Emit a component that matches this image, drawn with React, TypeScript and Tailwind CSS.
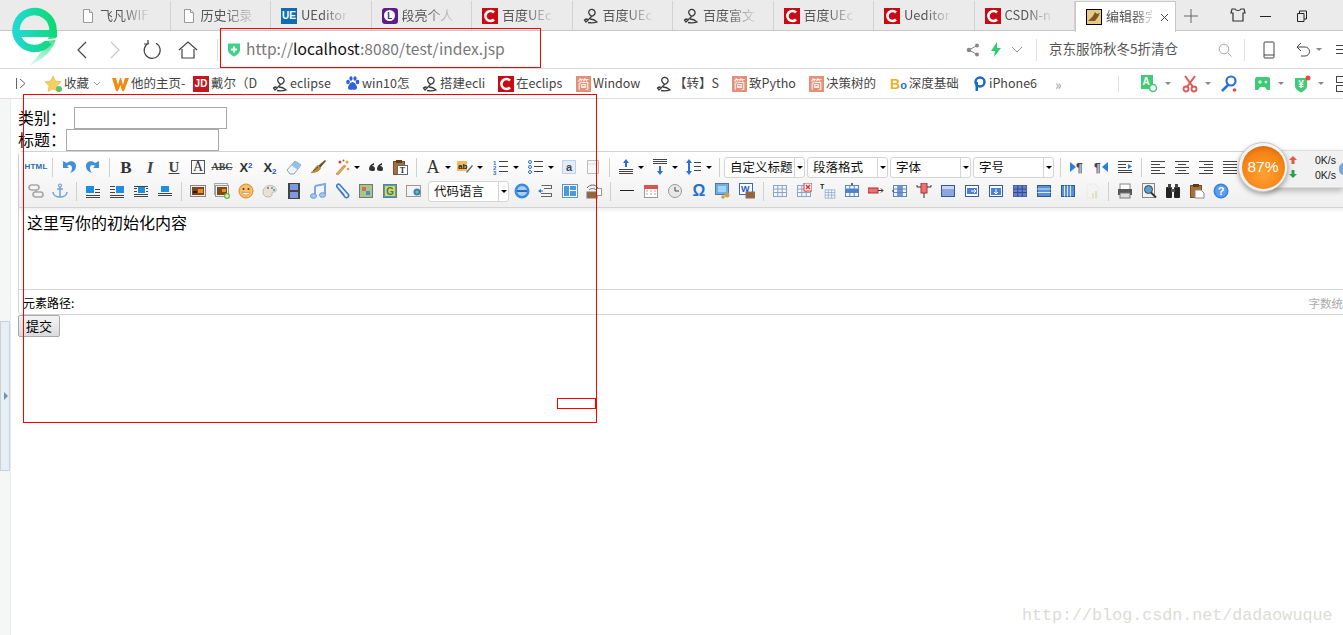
import React from 'react';

const Svg: React.FC<{ s?: number; className?: string; children: React.ReactNode }> = ({ s = 16, className, children }) => (
  <svg width={s} height={s} viewBox="0 0 16 16" className={className}>
    {children}
  </svg>
);

const Lines: React.FC<{ x?: number; y?: number; w?: number; n?: number; gap?: number; c?: string }> = ({ x = 1, y = 2, w = 14, n = 4, gap = 3, c = '#444' }) => (
  <>
    {Array.from({ length: n }).map((_, i) => (
      <rect key={i} x={x} y={y + i * gap} width={w} height={1} fill={c} />
    ))}
  </>
);

const Grid: React.FC<{ hi?: React.ReactNode; c?: string; bg?: string }> = ({ hi, c = '#5c84b8', bg = '#e4eefa' }) => (
  <>
    <rect x="1.5" y="2.5" width="13" height="11" fill={bg} stroke={c} />
    {hi}
    <path d="M1.5 6h13M1.5 9.500h13M5.800 2.500v11M10.200 2.500v11" stroke={c} strokeWidth="1" fill="none" />
  </>
);

const Picture: React.FC = () => (
  <>
    <rect x="0.500" y="2.500" width="15" height="11" fill="#eee" stroke="#888" />
    <rect x="2" y="4" width="12" height="8" fill="#7a4a1c" />
    <rect x="8" y="6" width="5" height="4" fill="#f08a1e" />
    <rect x="3" y="8" width="4" height="2" fill="#2a1a08" />
  </>
);

const Wrap: React.FC<{ type: 'left' | 'right' | 'block' | 'center' }> = ({ type }) => (
  <Svg>
    {type === 'left' && <><rect x="1" y="3" width="8" height="7" fill="#1b8fe0" /><Lines x={10} y={6} w={5} n={2} /><Lines x={1} y={12} n={2} gap={2} /></>}
    {type === 'right' && <><rect x="7" y="3" width="8" height="7" fill="#1b8fe0" /><Lines x={1} y={3} w={5} n={3} /><Lines x={1} y={12} n={2} gap={2} /></>}
    {type === 'block' && <><Lines x={1} y={3} w={14} n={1} /><rect x="5" y="4" width="7" height="6" fill="#1b8fe0" /><Lines x={1} y={5} w={3} n={2} /><Lines x={13} y={5} w={2} n={2} /><Lines x={1} y={11} n={2} gap={2} /></>}
    {type === 'center' && <><rect x="4" y="3" width="8" height="6" fill="#1b8fe0" /><Lines x={1} y={10} n={2} gap={2} /></>}
  </Svg>
);

const icons: Record<string, React.ReactNode> = {
  html: <span className="text-[8px] font-bold text-[#2a6aa8] tracking-[0.2px] font-['Liberation_Sans',sans-serif]">HTML</span>,
  undo: <Svg><path d="M2 2v7h6L6 7c2-2 5-1 5 2 0 2-1 4-2 5 3-1 6-3 6-7 0-5-6-6-9-3z" fill="#3f8fdc" /></Svg>,
  redo: <Svg><path d="M14 2v7H8l2-2C8 5 5 6 5 9c0 2 1 4 2 5-3-1-6-3-6-7 0-5 6-6 9-3z" fill="#3f8fdc" /></Svg>,
  b: <span className="font-['Liberation_Serif',serif] font-bold text-[17px] text-[#333] leading-none">B</span>,
  i: <span className="font-['Liberation_Serif',serif] italic font-bold text-[17px] text-[#444] leading-none">I</span>,
  u: <span className="font-['Liberation_Serif',serif] underline font-bold text-[15px] text-[#444] leading-none">U</span>,
  fbox: <span className="font-['Liberation_Serif',serif] border border-[#555] w-[14px] h-[14px] flex items-center justify-center text-[14px] text-[#333] leading-none">A</span>,
  abc: <span className="font-['Liberation_Serif',serif] line-through text-[10px] font-bold text-[#444] leading-none">ABC</span>,
  sup: <span className="font-['Liberation_Sans',sans-serif] font-bold text-[13px] text-[#333] leading-none">X<sup className="text-[8px] text-[#2456c8]">2</sup></span>,
  sub: <span className="font-['Liberation_Sans',sans-serif] font-bold text-[13px] text-[#333] leading-none">X<sub className="text-[8px] text-[#2456c8]">2</sub></span>,
  eraser: <Svg><path d="M1 11 9 2l6 4-7 9H4z" fill="#eef4fb" stroke="#8aa" /><path d="M9 2l6 4-3.500 4.500-6-4z" fill="#8fc0ee" /></Svg>,
  brush: <Svg><path d="M8 7l7-6 1 1-6 7z" fill="#6b4a22" /><path d="M1 13c3-1 4-6 7-7l3 3c-1 3-5 5-10 5z" fill="#b78a3c" /><path d="M3 12l5-4" stroke="#6b4a22" /></Svg>,
  wand: <Svg><path d="M2 15 10 6l2 1-8 9z" fill="#e9a84a" stroke="#a86a1c" strokeWidth=".5" /><circle cx="6" cy="3" r="1.500" fill="#e34" /><circle cx="13" cy="3" r="1.500" fill="#e8a020" /><circle cx="14" cy="10" r="1.300" fill="#e8a020" /><circle cx="9.500" cy="1.500" r="1" fill="#3a8a3a" /></Svg>,
  quote: <Svg><path d="M1 10c0-3 2-5 5-6v2c-1 0-2 1-2 1 2 0 3 1 3 3s-1 2-3 2-3-1-3-2zM9 10c0-3 2-5 5-6v2c-1 0-2 1-2 1 2 0 3 1 3 3s-1 2-3 2-3-1-3-2z" fill="#333" /></Svg>,
  paste: <Svg><rect x="1.500" y="2.500" width="11" height="13" fill="#a9713a" stroke="#7a4d22" /><rect x="4" y="1" width="6" height="3" fill="#5d3c1a" /><rect x="5.500" y="6.500" width="10" height="9" fill="#fff" stroke="#667" /><text x="10.500" y="14" textAnchor="middle" fontSize="8" fontWeight="700" fontFamily="Liberation Serif" fill="#234">T</text></Svg>,
  fcolor: <span className="font-['Liberation_Serif',serif] text-[18px] text-[#333] leading-none">A</span>,
  bcolor: <Svg><rect x="0" y="2" width="10" height="10" fill="#f4b860" /><text x="1" y="10" fontSize="8" fontWeight="700" fontFamily="Liberation Sans" fill="#222">ab</text><path d="M9 13l6-7 1 1-6 7z" fill="#666" /></Svg>,
  ol: <Svg><text x="0" y="6" fontSize="6" fontWeight="700" fontFamily="Liberation Sans" fill="#2a6fd0">1</text><text x="0" y="11" fontSize="6" fontWeight="700" fontFamily="Liberation Sans" fill="#2a6fd0">2</text><text x="0" y="16" fontSize="6" fontWeight="700" fontFamily="Liberation Sans" fill="#2a6fd0">3</text><Lines x={6} y={2} w={9} n={3} gap={5} /></Svg>,
  ul: <Svg><circle cx="2" cy="3" r="1.500" fill="none" stroke="#2a6fd0" /><circle cx="2" cy="8" r="1.500" fill="none" stroke="#2a6fd0" /><circle cx="2" cy="13" r="1.500" fill="none" stroke="#2a6fd0" /><Lines x={6} y={2} w={9} n={3} gap={5} /></Svg>,
  selectall: <Svg><rect x="1.500" y="1.500" width="13" height="13" fill="#e2ecfa" stroke="#8ab0e6" strokeDasharray="1 1" /><text x="8" y="12" textAnchor="middle" fontSize="11" fontWeight="700" fontFamily="Liberation Sans" fill="#444">a</text></Svg>,
  page: <Svg><path d="M2.500 1.500h11v13h-11z" fill="#f8f8f8" stroke="#bbb" /><path d="M3 5h10" stroke="#ddd" /></Svg>,
  spTop: <Svg><path d="M8 0l3 4H9v4H7V4H5z" fill="#2a6fd0" /><Lines x={1} y={10} n={3} gap={2} /></Svg>,
  spBottom: <Svg><Lines x={1} y={0} n={3} gap={2} /><path d="M8 16l3-4H9V7H7v5H5z" fill="#2a6fd0" /></Svg>,
  lh: <Svg><path d="M3 0l3 4H4v8h2l-3 4-3-4h2V4H0z" fill="#2a6fd0" /><Lines x={8} y={3} w={7} n={3} gap={4} /></Svg>,
  ltr: <Svg><path d="M1 3l6 5-6 5z" fill="#2a7fdc" /><text x="7" y="13" fontSize="12" fontFamily="Liberation Sans" fontWeight="700" fill="#445">¶</text></Svg>,
  rtl: <Svg><path d="M15 3 9 8l6 5z" fill="#2a7fdc" /><text x="1" y="13" fontSize="12" fontFamily="Liberation Sans" fontWeight="700" fill="#445">¶</text></Svg>,
  indent: <Svg><Lines x={1} y={2} w={14} n={1} /><Lines x={1} y={5} w={8} n={2} /><path d="M11 5l4 2.500-4 2.500z" fill="#2a7fdc" /><Lines x={1} y={11} w={14} n={2} gap={2} /></Svg>,
  aleft: <Svg><Lines x={1} y={2} w={14} n={1} /><Lines x={1} y={5} w={9} n={1} /><Lines x={1} y={8} w={14} n={1} /><Lines x={1} y={11} w={9} n={1} /><Lines x={1} y={14} w={14} n={1} /></Svg>,
  acenter: <Svg><Lines x={1} y={2} w={14} n={1} /><Lines x={4} y={5} w={8} n={1} /><Lines x={1} y={8} w={14} n={1} /><Lines x={4} y={11} w={8} n={1} /><Lines x={1} y={14} w={14} n={1} /></Svg>,
  aright: <Svg><Lines x={1} y={2} w={14} n={1} /><Lines x={6} y={5} w={9} n={1} /><Lines x={1} y={8} w={14} n={1} /><Lines x={6} y={11} w={9} n={1} /><Lines x={1} y={14} w={14} n={1} /></Svg>,
  ajust: <Svg><Lines x={1} y={2} w={14} n={5} /></Svg>,
  link: <Svg><rect x="1" y="2" width="10" height="5" rx="2.500" fill="none" stroke="#a8a8a8" strokeWidth="1.700" /><rect x="5" y="9" width="10" height="5" rx="2.500" fill="none" stroke="#a8a8a8" strokeWidth="1.700" /><path d="M8 7v2" stroke="#a8a8a8" strokeWidth="1.700" /></Svg>,
  anchor: <Svg><circle cx="8" cy="2.500" r="1.500" fill="none" stroke="#6fa3d8" strokeWidth="1.200" /><path d="M8 4v10M5 6h6M1 9c0 3 3 5 7 5s7-2 7-5" fill="none" stroke="#6fa3d8" strokeWidth="1.500" /></Svg>,
  wleft: <Wrap type="left" />,
  wright: <Wrap type="right" />,
  wblock: <Wrap type="block" />,
  wcenter: <Wrap type="center" />,
  image: <Svg><Picture /></Svg>,
  multi: <Svg><rect x="0.500" y="0.500" width="13" height="11" fill="#eee" stroke="#aaa" /><rect x="1.500" y="2.500" width="13" height="11" fill="#eee" stroke="#999" /><rect x="3" y="4" width="10" height="8" fill="#7a4a1c" /><rect x="8" y="6" width="4" height="3" fill="#f08a1e" /><circle cx="13" cy="13" r="3" fill="#6cb33f" /><path d="M11 13h4M13 11v4" stroke="#fff" /></Svg>,
  emoji: <Svg><circle cx="8" cy="8" r="7" fill="#f4c069" stroke="#d98a2a" /><circle cx="5.500" cy="6" r="1" fill="#5a3a10" /><circle cx="10.500" cy="6" r="1" fill="#5a3a10" /><path d="M4 9c2 1 6 1 8 0-1 4-7 4-8 0z" fill="#fff" stroke="#a86a1c" strokeWidth=".5" /></Svg>,
  scrawl: <Svg><path d="M1 9c0-5 6-8 10-6 4 2 4 5 2 6-2 0-3 0-3 2s-1 3-4 3-5-2-5-5z" fill="#e6e2d4" stroke="#bbb" /><circle cx="6" cy="5" r="1" fill="#c55" /><circle cx="10" cy="5" r="1" fill="#5a5" /><circle cx="12" cy="7" r="1" fill="#58c" /></Svg>,
  video: <Svg><rect x="2" y="0" width="12" height="16" fill="#444" /><rect x="4" y="1" width="8" height="6" fill="#7d9ade" /><rect x="4" y="9" width="8" height="6" fill="#7d9ade" /></Svg>,
  music: <Svg><path d="M5 3l10-2v10" fill="none" stroke="#7aa8e0" strokeWidth="2" /><path d="M5 3v10" stroke="#7aa8e0" strokeWidth="2" /><ellipse cx="3.500" cy="13" rx="3" ry="2.300" fill="#a8c8f0" stroke="#6a98d8" /><ellipse cx="12.500" cy="12" rx="3" ry="2.300" fill="#a8c8f0" stroke="#6a98d8" /></Svg>,
  attach: <Svg><path d="M3 4l8 10c2 2 5-1 3-3L6 2C4 0 2 2 3 4l7 8" fill="none" stroke="#3a78d0" strokeWidth="1.600" /></Svg>,
  gmap: <Svg><rect x="1.500" y="1.500" width="13" height="13" fill="#a6c78a" stroke="#777" /><rect x="4" y="4" width="4" height="4" fill="#d65" /><rect x="8" y="8" width="4" height="4" fill="#58c" /></Svg>,
  gmap2: <Svg><rect x="1.500" y="1.500" width="13" height="13" fill="#2aa8e0" stroke="#777" /><rect x="3" y="3" width="10" height="10" fill="#f4d030" /><text x="8" y="12" textAnchor="middle" fontSize="10" fontWeight="700" fontFamily="Liberation Sans" fill="#18a">G</text></Svg>,
  bmap: <Svg><rect x="0.500" y="2.500" width="14" height="11" fill="#f4f4f4" stroke="#999" /><circle cx="11" cy="9" r="3.500" fill="#3a80c8" /><circle cx="11" cy="9" r="1.500" fill="#7c5" /></Svg>,
  iframe: <Svg><circle cx="8" cy="8" r="7.500" fill="#3a8ae0" /><circle cx="8" cy="8" r="5" fill="#a6d0f6" /><rect x="3" y="7" width="10" height="2" fill="#2a6ac0" /></Svg>,
  pagebreak: <Svg><path d="M3 2h11v4H6V5h7V3H4zM3 10h11v4H3v-1h10v-2H3z" fill="#666" /><path d="M0 8l3-2v4z" fill="#2a6fd0" /><rect x="3" y="7.500" width="2" height="1" fill="#2a6fd0" /></Svg>,
  template: <Svg><rect x="0.500" y="1.500" width="15" height="13" fill="#fff" stroke="#5e92c8" /><rect x="2" y="3" width="5" height="10" fill="#4a9ae0" /><rect x="8" y="3" width="6" height="4" fill="#4a9ae0" /><rect x="8" y="8" width="6" height="5" fill="#4a9ae0" /></Svg>,
  bgimg: <Svg><path d="M1 5c3-4 8-4 11 0" fill="none" stroke="#666" /><path d="M3 7c2-2 5-2 7 0" fill="none" stroke="#666" /><rect x="1" y="9" width="10" height="6" fill="#a0622a" stroke="#777" /><rect x="10.500" y="5.500" width="5" height="7" fill="#fff" stroke="#999" /></Svg>,
  hr: <Svg><rect x="1" y="7" width="14" height="1" fill="#222" /></Svg>,
  date: <Svg><rect x="1.500" y="2.500" width="13" height="12" fill="#fff" stroke="#999" /><rect x="1" y="2" width="14" height="4" fill="#d9534f" /><path d="M3 8h2M7 8h2M11 8h2M3 11h2M7 11h2M11 11h2" stroke="#c99" /></Svg>,
  time: <Svg><circle cx="8" cy="8" r="6.500" fill="#e8e8e8" stroke="#999" /><path d="M8 4v4h4" fill="none" stroke="#444" /></Svg>,
  omega: <span className="font-['Liberation_Sans',sans-serif] font-bold text-[16px] text-[#2a6fd0] leading-none">Ω</span>,
  snap: <Svg><rect x="0.500" y="0.500" width="13" height="11" fill="#6fb0de" stroke="#4a78b0" /><rect x="3" y="3" width="8" height="6" fill="#a6d4f4" /><circle cx="12" cy="12" r="2.500" fill="#c9a050" /><circle cx="8" cy="14" r="1.800" fill="#c9a050" /></Svg>,
  word: <Svg><rect x="0.500" y="0.500" width="13" height="11" fill="#fff" stroke="#3a6ac0" /><text x="2" y="9" fontSize="9" fontWeight="700" fontFamily="Liberation Sans" fill="#2456c8">W</text><rect x="7" y="9" width="9" height="6" fill="#a0622a" stroke="#777" /></Svg>,
  table: <Svg><Grid c="#8ba6c8" bg="#f2f6fb" /></Svg>,
  tdel: <Svg><Grid c="#8ba6c8" bg="#f2f6fb" /><rect x="8" y="0" width="8" height="8" fill="#fff" stroke="#d33" /><path d="M10 2l4 4M14 2l-4 4" stroke="#d33" strokeWidth="1.500" /></Svg>,
  ttitle: <Svg><text x="0" y="6" fontSize="7" fontWeight="700" fontFamily="Liberation Sans" fill="#222">T</text><g transform="translate(4 5) scale(.75)"><Grid c="#8ba6c8" bg="#f2f6fb" /></g></Svg>,
  trow: <Svg><Grid hi={<rect x="1.500" y="6" width="13" height="3.500" fill="#4a80d8" />} bg="#f2f6fb" /><path d="M8 0v2M7 1h2" stroke="#333" /></Svg>,
  trowdel: <Svg><rect x="0" y="5" width="10" height="5" fill="#ee7070" stroke="#a33" /><path d="M10 7.500h5M13 5.500l2 2-2 2" fill="none" stroke="#333" /></Svg>,
  tcol: <Svg><Grid hi={<rect x="5.800" y="2.500" width="4.400" height="11" fill="#6a98e0" />} bg="#f2f6fb" /><path d="M0 8h2" stroke="#333" /></Svg>,
  tcoldel: <Svg><rect x="5" y="0" width="6" height="10" fill="#ee7070" stroke="#a33" /><path d="M8 10v5M1 2v2h4M15 2v2h-4" fill="none" stroke="#333" /></Svg>,
  tmerge: <Svg><rect x="1.500" y="2.500" width="13" height="11" fill="#8ba6e0" stroke="#345a9c" /><rect x="2" y="3" width="12" height="3" fill="#c6d6f4" /></Svg>,
  tright: <Svg><rect x="1.500" y="2.500" width="13" height="11" fill="#fff" stroke="#345a9c" /><rect x="3" y="5" width="10" height="6" fill="#4a80d8" /><path d="M7 8h5M10 6l2 2-2 2" fill="none" stroke="#fff" /></Svg>,
  tdown: <Svg><rect x="1.500" y="2.500" width="13" height="11" fill="#fff" stroke="#345a9c" /><rect x="3" y="5" width="10" height="7" fill="#4a80d8" /><path d="M8 6v5M6 9l2 2 2-2" fill="none" stroke="#fff" /></Svg>,
  tcell: <Svg><Grid hi={<rect x="1.500" y="2.500" width="13" height="11" fill="#6a80c8" />} c="#2a4a90" /></Svg>,
  trows: <Svg><rect x="1.500" y="2.500" width="13" height="11" fill="#5a90d8" stroke="#2a5a9c" /><path d="M1.500 6h13M1.500 9.500h13" stroke="#dce8f8" /></Svg>,
  tcols: <Svg><rect x="1.500" y="2.500" width="13" height="11" fill="#5a90d8" stroke="#2a5a9c" /><path d="M4.500 2.500v11M7.500 2.500v11M10.500 2.500v11" stroke="#dce8f8" /></Svg>,
  draft: <Svg className="opacity-40"><path d="M3 1h8l3 3v11H3z" fill="#f4f4f4" stroke="#ddd" /><rect x="8" y="10" width="2" height="5" fill="#e8c870" /><rect x="11" y="8" width="2" height="7" fill="#a8d090" /></Svg>,
  print: <Svg><rect x="3" y="1" width="10" height="6" fill="#fff" stroke="#888" /><rect x="1" y="6" width="14" height="6" fill="#555" /><rect x="3" y="10" width="10" height="5" fill="#ddd" stroke="#777" /></Svg>,
  preview: <Svg><rect x="1.500" y="0.500" width="12" height="14" fill="#f2f2f2" stroke="#888" /><circle cx="7.500" cy="6.500" r="4" fill="#5aa0d8" stroke="#444" /><path d="M10 9.500l5 5" stroke="#333" strokeWidth="2" /></Svg>,
  search: <Svg><rect x="1" y="4" width="6" height="11" rx="1" fill="#222" /><rect x="9" y="4" width="6" height="11" rx="1" fill="#222" /><rect x="3" y="1" width="3" height="4" fill="#444" /><rect x="10" y="1" width="3" height="4" fill="#444" /><rect x="6" y="6" width="4" height="3" fill="#555" /></Svg>,
  clip: <Svg><rect x="1.500" y="2.500" width="11" height="12" fill="#a9713a" stroke="#7a4d22" /><rect x="4" y="1" width="6" height="3" fill="#5d3c1a" /><path d="M6 7h6l3 3v5H6z" fill="#fff" stroke="#888" /></Svg>,
  help: <Svg><circle cx="8" cy="8" r="7.500" fill="#3a80e0" /><circle cx="8" cy="8" r="6" fill="#5b9ef0" /><text x="8" y="12" textAnchor="middle" fontSize="11" fontWeight="700" fontFamily="Liberation Sans" fill="#fff">?</text></Svg>,
};

const Btn: React.FC<{ n: string }> = ({ n }) => (
  <div className="w-6 h-6 shrink-0 flex items-center justify-center">{icons[n]}</div>
);

const Caret: React.FC = () => (
  <span className="w-0 h-0 border-x-[3px] border-x-transparent border-t-[3px] border-t-black" />
);

const Split: React.FC<{ n: string; w: string }> = ({ n, w }) => (
  <div className={`${w} h-6 shrink-0 flex items-center`}>
    <Btn n={n} />
    <Caret />
  </div>
);

const Sep: React.FC = () => (
  <div className="w-[9px] h-6 shrink-0 flex items-center justify-center">
    <span className="w-px h-[19px] bg-[#d0d0d0]" />
  </div>
);

const Combo: React.FC<{ label: string; w?: string }> = ({ label, w = 'w-[81px]' }) => (
  <div className={`${w} h-[21px] shrink-0 flex border border-[#d4d4d4] rounded-[3px] bg-white text-[12.500px] text-[#111] leading-[17px]`}>
    <span className="flex-1 pl-[5px] whitespace-nowrap">{label}</span>
    <span className="w-[10px] border-l border-[#d4d4d4] flex items-center justify-center"><Caret /></span>
  </div>
);

const Page: React.FC = () => (
  <Svg>
    <path d="M3.500 1.500h6l3 3v10h-9z" fill="#fff" stroke="#999" />
    <path d="M9.500 1.500v3h3" fill="#eee" stroke="#999" />
  </Svg>
);

const CIcon: React.FC = () => (
  <span className="w-4 h-4 bg-[#c90a14] flex items-center justify-center shrink-0">
    <svg width="14" height="14" viewBox="0 0 14 14"><path d="M11 3.500A5 5 0 1 0 11 10.500" fill="none" stroke="#fff" strokeWidth="2.600" /></svg>
  </span>
);

const Swirl: React.FC = () => (
  <Svg>
    <path d="M6 5.500C5 3 7 1 9.500 1.500S13 5 11 7 7 8 6 5.500zM9 8 3 14l-1.500-2c1-1 2-1 3-1M7 11c2 0 5 1 7 3-3 1-6 1-9 .500" fill="none" stroke="#3a3a3a" strokeWidth="1.300" />
  </Svg>
);

const Simple: React.FC = () => (
  <span className="w-[15px] h-[16px] bg-[#e58f78] text-white text-[12px] leading-[15px] text-center shrink-0">简</span>
);

const Tab: React.FC<{ icon: React.ReactNode; label: string }> = ({ icon, label }) => (
  <div className="relative w-[100.500px] h-full shrink-0 flex items-center pl-[10px] border-r border-[#d2d2d2]">
    <span className="shrink-0 w-4 h-4 flex items-center justify-center">{icon}</span>
    <span className="ml-[4px] pb-[2px] text-[13px] text-[#555] whitespace-nowrap [mask-image:linear-gradient(to_right,black_45%,rgba(0,0,0,0.1)_100%)]">{label}</span>
  </div>
);

const Mark: React.FC<{ icon: React.ReactNode; label: string; w: string }> = ({ icon, label, w }) => (
  <div className={`${w} shrink-0 flex items-center gap-[2px] whitespace-nowrap`}>
    <span className="shrink-0 flex items-center">{icon}</span>
    <span className="pb-[1px]">{label}</span>
  </div>
);

const SmallCaret: React.FC = () => (
  <span className="w-0 h-0 border-x-[3px] border-x-transparent border-t-[3px] border-t-[#888] ml-[7px]" />
);

const Logo: React.FC = () => (
  <svg width="48" height="60" viewBox="0 0 48 60" className="absolute left-[11px] top-[7px]">
    <defs>
      <linearGradient id="lg1" x1="0" x2="1" y1="0" y2="0">
        <stop offset="0" stopColor="#21d9d0" />
        <stop offset="1" stopColor="#0fd977" />
      </linearGradient>
      <linearGradient id="lg2" x1="0" x2="0" y1="0" y2="1">
        <stop offset="0" stopColor="#0fd977" />
        <stop offset="1" stopColor="#0fd977" stopOpacity="0.100" />
      </linearGradient>
    </defs>
    <path d="M46 24C46 40 34 52 18 59C24 52 33 44 37 31Z" fill="url(#lg2)" />
    <path d="M37.700 34.900A18.500 18.500 0 1 1 42 23" fill="none" stroke="url(#lg1)" strokeWidth="7.500" />
    <rect x="8" y="23" width="38" height="7" fill="url(#lg1)" />
    <path d="M32 33.500 46 32" stroke="#fff" strokeWidth="1.500" />
  </svg>
);

const App: React.FC = () => {
  const row1: React.ReactNode = (
    <div className="flex items-center h-6 pl-[5px]">
      <Btn n="html" /><Sep /><Btn n="undo" /><Btn n="redo" /><Sep />
      <Btn n="b" /><Btn n="i" /><Btn n="u" /><Btn n="fbox" /><Btn n="abc" /><Btn n="sup" /><Btn n="sub" /><Btn n="eraser" /><Btn n="brush" />
      <Split n="wand" w="w-[34px]" /><Btn n="quote" /><Btn n="paste" /><Sep />
      <Split n="fcolor" w="w-[32px]" /><Split n="bcolor" w="w-[36px]" /><Split n="ol" w="w-[35px]" /><Split n="ul" w="w-[33px]" />
      <Btn n="selectall" /><Btn n="page" /><Sep />
      <Split n="spTop" w="w-[34px]" /><Split n="spBottom" w="w-[34px]" /><Split n="lh" w="w-[33px]" />
      <Sep />
      <Combo label="自定义标题" />
      <div className="w-[2px] shrink-0" />
      <Combo label="段落格式" />
      <div className="w-[2px] shrink-0" />
      <Combo label="字体" />
      <div className="w-[2px] shrink-0" />
      <Combo label="字号" />
      <div className="w-[2px] shrink-0" />
      <Sep />
      <Btn n="ltr" /><Btn n="rtl" /><Btn n="indent" /><Sep />
      <Btn n="aleft" /><Btn n="acenter" /><Btn n="aright" /><Btn n="ajust" />
    </div>
  );

  const row2: React.ReactNode = (
    <div className="flex items-center h-6 pl-[5px]">
      <Btn n="link" /><Btn n="anchor" /><Sep />
      <Btn n="wleft" /><Btn n="wright" /><Btn n="wblock" /><Btn n="wcenter" /><Sep />
      <Btn n="image" /><Btn n="multi" /><Btn n="emoji" /><Btn n="scrawl" /><Btn n="video" /><Btn n="music" /><Btn n="attach" /><Btn n="gmap" /><Btn n="gmap2" /><Btn n="bmap" />
      <div className="w-[2px] shrink-0" />
      <Combo label="代码语言" />
      <div className="w-px shrink-0" />
      <Btn n="iframe" /><Btn n="pagebreak" /><Btn n="template" /><Btn n="bgimg" /><Sep />
      <Btn n="hr" /><Btn n="date" /><Btn n="time" /><Btn n="omega" /><Btn n="snap" /><Btn n="word" /><Sep />
      <Btn n="table" /><Btn n="tdel" /><Btn n="ttitle" /><Btn n="trow" /><Btn n="trowdel" /><Btn n="tcol" /><Btn n="tcoldel" /><Btn n="tmerge" /><Btn n="tright" /><Btn n="tdown" /><Btn n="tcell" /><Btn n="trows" /><Btn n="tcols" /><Btn n="draft" /><Sep />
      <Btn n="print" /><Btn n="preview" /><Btn n="search" /><Btn n="clip" /><Btn n="help" />
    </div>
  );

  return (
    <div className="relative w-[1343px] h-[635px] overflow-hidden bg-white font-['Noto_Sans_CJK_SC','Noto_Sans',sans-serif]">
      {/* tabs */}
      <div className="h-[31px] bg-[#ebebeb] border-b border-[#c8c8c8] flex pl-[70px] pt-[1px]">
        <Tab icon={<Page />} label="飞凡WIF" />
        <Tab icon={<Page />} label="历史记录" />
        <Tab icon={<span className="w-4 h-4 bg-[#0f6cb0] text-white text-[10px] font-bold leading-4 text-center font-['Liberation_Sans',sans-serif]">UE</span>} label="UEditor" />
        <Tab icon={<span className="w-4 h-4 bg-[#5a1f86] rounded-[3px] flex items-center justify-center"><span className="w-[11px] h-[11px] rounded-full bg-white text-[#5a1f86] text-[9px] font-bold leading-[11px] text-center">L</span></span>} label="段亮个人" />
        <Tab icon={<CIcon />} label="百度UEc" />
        <Tab icon={<Swirl />} label="百度UEc" />
        <Tab icon={<Swirl />} label="百度富文" />
        <Tab icon={<CIcon />} label="百度UEc" />
        <Tab icon={<CIcon />} label="Ueditor" />
        <Tab icon={<CIcon />} label="CSDN-n" />
        <div className="relative w-[100.500px] h-[31px] shrink-0 flex items-center pl-[10px] bg-white border-x border-t border-[#c8c8c8]">
          <span className="w-4 h-4 border border-black bg-[#e8c98a] flex items-center justify-center">
            <svg width="14" height="14" viewBox="0 0 14 14"><path d="M1 11 6 6l2-4 2 2 3-1-2 4-3 4H4z" fill="#7a5a20" /></svg>
          </span>
          <span className="ml-[4px] pb-[2px] text-[13px] text-[#555] whitespace-nowrap w-[46px] [mask-image:linear-gradient(to_right,black_60%,rgba(0,0,0,0.2)_100%)]">编辑器完</span>
          <svg width="9" height="9" viewBox="0 0 9 9" className="ml-[8px]"><path d="M1 1l7 7M8 1 1 8" stroke="#444" /></svg>
        </div>
        <svg width="14" height="14" viewBox="0 0 14 14" className="ml-[8px] mt-[8px]"><path d="M7 0v14M0 7h14" stroke="#666" /></svg>
        <svg width="16" height="16" viewBox="0 0 16 16" className="ml-[32px] mt-[6px]"><path d="M5 2H2L1 6h2v8h10V6h2l-1-4h-3c-1 2-5 2-6 0z" fill="none" stroke="#333" strokeWidth="1.200" /></svg>
        <span className="w-[11px] h-px bg-[#222] ml-[14px] mt-[15px]" />
        <svg width="12" height="12" viewBox="0 0 12 12" className="ml-[25px] mt-[9px]"><path d="M3.500 3.500V1h7v8H8M1.500 3.500h6.500v8H1.500z" fill="none" stroke="#222" /></svg>
      </div>

      {/* address bar */}
      <div className="h-[38px] bg-white border-b border-[#dcdcdc] flex items-center pl-[64px] [&>*]:shrink-0">
        <div className="w-[34px] flex justify-center"><svg width="11" height="18" viewBox="0 0 11 18"><path d="M10 1 2 9l8 8" fill="none" stroke="#444" strokeWidth="1.200" /></svg></div>
        <div className="w-[34px] flex justify-center"><svg width="11" height="18" viewBox="0 0 11 18"><path d="m1 1 8 8-8 8" fill="none" stroke="#c8c8c8" strokeWidth="1.200" /></svg></div>
        <div className="w-[40px] flex justify-center"><svg width="20" height="20" viewBox="0 0 20 20"><path d="M7 3a8 8 0 1 0 7 .300M6 0v4h-4" fill="none" stroke="#444" strokeWidth="1.200" /></svg></div>
        <div className="w-[32px] flex justify-center"><svg width="20" height="18" viewBox="0 0 20 18"><path d="M1 9l9-8 9 8M4 8v9h12V8" fill="none" stroke="#444" strokeWidth="1.200" /></svg></div>
        <span className="w-px h-[22px] bg-[#e0e0e0] ml-[13px]" />
        <svg width="14" height="15" viewBox="0 0 14 15" className="ml-[9px]"><path d="M1 1.500h12V8c0 3-3 5-6 6.500C4 13 1 11 1 8z" fill="#3ed28a" /><path d="M7 4.500v6M4 7.500h6" stroke="#fff" strokeWidth="2" /></svg>
        <span className="ml-[5px] pb-[2px] w-[260px] text-[15.600px] text-[#777] whitespace-nowrap">http://<span className="text-[#111]">localhost</span>:8080/test/index.jsp</span>
        <svg width="14" height="14" viewBox="0 0 14 14" className="ml-[460px]"><circle cx="3" cy="7" r="2.300" fill="#888" /><circle cx="11" cy="2.500" r="2" fill="#888" /><circle cx="11" cy="11.500" r="2" fill="#888" /><path d="M3 7l8-4.500M3 7l8 4.500" stroke="#888" /></svg>
        <svg width="10" height="15" viewBox="0 0 10 15" className="ml-[11px]"><path d="M6 0 0 9h4l-1 6 7-9H6z" fill="#2ecc71" /></svg>
        <svg width="12" height="7" viewBox="0 0 12 7" className="ml-[10px]"><path d="m1 1 5 5 5-5" fill="none" stroke="#999" /></svg>
        <span className="w-px h-[22px] bg-[#e0e0e0] ml-[13px]" />
        <span className="ml-[12px] pb-[2px] w-[150px] text-[13.500px] text-[#555] whitespace-nowrap">京东服饰秋冬5折清仓</span>
        <svg width="14" height="14" viewBox="0 0 14 14" className="ml-[19px]"><circle cx="6" cy="6" r="4.800" fill="none" stroke="#aaa" /><path d="m9.500 9.500 4 4" stroke="#aaa" /></svg>
        <span className="w-px h-[22px] bg-[#e0e0e0] ml-[12px]" />
        <svg width="12" height="18" viewBox="0 0 12 18" className="ml-[18px]"><rect x="1" y="1" width="10" height="16" rx="1" fill="none" stroke="#444" /><path d="M1 14h10" stroke="#444" /></svg>
        <svg width="16" height="16" viewBox="0 0 16 16" className="ml-[20px]"><path d="M6 1 2 5l4 4M2 5h8a4.500 4.500 0 0 1 0 9H6" fill="none" stroke="#444" /></svg>
        <span className="w-0 h-0 border-x-[3px] border-x-transparent border-t-[3px] border-t-[#888] ml-[5px]" />
        <span className="ml-[14px] w-[12px] h-[9px] border-y border-[#444] relative after:absolute after:left-0 after:right-0 after:top-[3px] after:h-px after:bg-[#444]" />
      </div>

      {/* bookmarks */}
      <div className="h-[30px] bg-white border-b border-[#dcdcdc] flex items-center text-[12.500px] text-[#444] leading-none">
        <div className="w-[45px] shrink-0 pl-[16px] flex items-center">
          <svg width="10" height="11" viewBox="0 0 10 11"><path d="M.500 0v11M4 1l5 4.500L4 10" fill="none" stroke="#666" /></svg>
        </div>
        <div className="w-[67px] shrink-0 flex items-center gap-[1px]">
          <svg width="18" height="18" viewBox="0 0 18 18"><path d="m8 1 2.500 5 5.500.800-4 4 1 5.500L8 14l-5 2.300 1-5.500-4-4 5.500-.800z" fill="#f4d060" stroke="#d8a830" strokeWidth=".5" /><circle cx="14" cy="14" r="3" fill="#5cc46a" /></svg>
          <span className="pb-[1px]">收藏</span>
          <svg width="8" height="5" viewBox="0 0 8 5" className="ml-[3px]"><path d="m1 1 3 3 3-3" fill="none" stroke="#999" /></svg>
        </div>
        <Mark w="w-[81px]" label="他的主页-" icon={<svg width="17" height="14" viewBox="0 0 17 14"><path d="M0 1h4l2 7 2-7h1l2 7 2-7h4l-5 13h-2L8.500 8 6 14H4z" fill="#f08a12" /></svg>} />
        <Mark w="w-[79px]" label="戴尔（D" icon={<span className="w-4 h-4 bg-[#c4161c] text-white text-[10px] font-bold leading-4 text-center font-['Liberation_Sans',sans-serif]">JD</span>} />
        <Mark w="w-[73px]" label="eclipse" icon={<Swirl />} />
        <Mark w="w-[77px]" label="win10怎" icon={<svg width="15" height="15" viewBox="0 0 15 15" fill="#3060e0"><ellipse cx="3" cy="6" rx="1.800" ry="2.300" /><ellipse cx="6" cy="2.500" rx="1.600" ry="2.200" /><ellipse cx="10" cy="2.500" rx="1.600" ry="2.200" /><ellipse cx="12.500" cy="6" rx="1.800" ry="2.300" /><path d="M7.500 6c2 0 5 4 4.500 6s-3 2-4.500 1.500C6 14 3 14 3 12s2.500-6 4.500-6z" /></svg>} />
        <Mark w="w-[76px]" label="搭建ecli" icon={<Swirl />} />
        <Mark w="w-[78px]" label="在eclips" icon={<CIcon />} />
        <Mark w="w-[80px]" label="Window" icon={<Simple />} />
        <Mark w="w-[76px]" label="【转】S" icon={<Swirl />} />
        <Mark w="w-[77px]" label="致Pytho" icon={<Simple />} />
        <Mark w="w-[81px]" label="决策树的" icon={<Simple />} />
        <Mark w="w-[83px]" label="深度基础" icon={<span className="text-[14px] font-bold leading-none font-['Liberation_Sans',sans-serif]"><span className="text-[#f0b020]">B</span><span className="text-[#2a6fd0] text-[11px]">o</span></span>} />
        <Mark w="w-[82px]" label="iPhone6" icon={<svg width="14" height="16" viewBox="0 0 14 16"><circle cx="7" cy="6" r="4.500" fill="none" stroke="#1a6ac8" strokeWidth="2.500" /><rect x="2.500" y="6" width="2.500" height="9" fill="#1a6ac8" /></svg>} />
        <span className="w-[63px] shrink-0 text-[#999] text-[14px] leading-none">»</span>
        <span className="w-px h-[16px] bg-[#e0e0e0] shrink-0" />
        <div className="ml-[21px] flex items-center w-[42px] shrink-0">
          <svg width="18" height="19" viewBox="0 0 18 19"><path d="M1 1h12v14H1z" fill="#3ecb74" /><text x="2.500" y="11" fontSize="10" fontWeight="700" fontFamily="Liberation Sans" fill="#fff">A</text><circle cx="13" cy="14" r="3.500" fill="#fff" stroke="#3ecb74" strokeWidth="1.500" /></svg>
          <SmallCaret />
        </div>
        <div className="flex items-center w-[39px] shrink-0">
          <svg width="16" height="18" viewBox="0 0 16 18"><path d="M3 1l8 11M13 1 5 12" stroke="#e25757" strokeWidth="2" /><circle cx="4" cy="14" r="2.500" fill="none" stroke="#e25757" strokeWidth="1.800" /><circle cx="12" cy="14" r="2.500" fill="none" stroke="#e25757" strokeWidth="1.800" /></svg>
          <SmallCaret />
        </div>
        <div className="flex items-center w-[33px] shrink-0">
          <svg width="16" height="18" viewBox="0 0 16 18"><circle cx="10" cy="6" r="4.500" fill="none" stroke="#2a6fe0" strokeWidth="2.200" /><path d="M7 10l-6 6" stroke="#2a6fe0" strokeWidth="2.500" /><circle cx="13.500" cy="15" r="1.800" fill="#e44" /></svg>
        </div>
        <div className="flex items-center w-[40px] shrink-0">
          <svg width="17" height="16" viewBox="0 0 17 16"><path d="M3 1h11a2 2 0 0 1 2 2v11h-3l-2-3H6l-2 3H1V3a2 2 0 0 1 2-2z" fill="#3ecb74" /><path d="M4 6h4M6 4v4" stroke="#fff" /><circle cx="12" cy="6" r="1.300" fill="#fff" /></svg>
          <SmallCaret />
        </div>
        <div className="flex items-center w-[42px] shrink-0">
          <svg width="17" height="18" viewBox="0 0 17 18"><path d="M1 3h12v8c0 3-3 5-6 6.500C4 16 1 14 1 11z" fill="#3ecb74" /><text x="7" y="13" textAnchor="middle" fontSize="10" fontWeight="700" fontFamily="Liberation Sans" fill="#fff">¥</text><circle cx="14" cy="3" r="2.500" fill="#e44" /></svg>
          <SmallCaret />
        </div>
        <svg width="12" height="16" viewBox="0 0 12 16" className="shrink-0"><rect x=".5" y=".5" width="11" height="6" fill="none" stroke="#444" /><rect x=".5" y="9.500" width="11" height="6" fill="none" stroke="#444" /></svg>
      </div>

      {/* page */}
      <div className="flex h-[536px]">
        <div className="w-[11px] shrink-0 bg-[#f5f7f7] border-r border-[#ebebeb] pt-[222px]">
          <div className="h-[150px] w-[10px] bg-[#e8eff4] border border-[#c5d3df] flex items-center">
            <span className="w-0 h-0 border-y-[4px] border-y-transparent border-l-[4px] border-l-[#6a94b4] ml-[3px]" />
          </div>
        </div>
        <div className="flex-1 min-w-0 pl-[7px] pt-[8px] text-[16px] leading-[22px] text-black">
          <div className="h-[22px] flex items-center">
            <span className="pb-[2px]">类别：</span>
            <input className="ml-[8px] w-[153px] h-[22px] border border-[#a9a9a9] bg-white" readOnly />
          </div>
          <div className="h-[22px] flex items-center">
            <span className="pb-[2px]">标题：</span>
            <input className="w-[153px] h-[22px] border border-[#a9a9a9] bg-white" readOnly />
          </div>
          <div className="w-[1340px] border border-[#d4d4d4] rounded-l-[4px]">
            <div className="h-[56px] pt-[3px] bg-gradient-to-b from-white to-[#efefef] border-b border-[#d4d4d4] shadow-[0_2px_4px_rgba(0,0,0,0.08)]">
              {row1}
              {row2}
            </div>
            <div className="h-[82px] border-b border-[#d4d4d4] pl-[8px] pt-[3px] text-[16px] leading-[22px]">这里写你的初始化内容</div>
            <div className="h-[24px] flex items-center justify-between pl-[4px] pr-[14px] pt-[2px] text-[12px]">
              <span>元素路径:</span>
              <span className="text-[#aaa] text-[11.500px] whitespace-nowrap">字数统</span>
            </div>
          </div>
          <button className="block w-[42px] h-[22px] pb-[2px] border border-[#a9a9a9] rounded-[2px] bg-gradient-to-b from-[#f4f4f4] to-[#dcdcdc] text-[13px] leading-none text-black">提交</button>
        </div>
      </div>

      {/* floating speed widget */}
      <div className="absolute left-[1265px] top-[150px] w-[78px] h-[38px] bg-[#f1f1f1] border-y border-[#dedede] shadow-[0_3px_6px_rgba(0,0,0,0.25)] text-[10.500px] text-[#222] leading-none font-['Liberation_Sans',sans-serif]">
        <svg width="8" height="8" viewBox="0 0 8 8" className="absolute left-[24px] top-[5px]"><path d="M4 0 8 4H5.500v4h-3V4H0z" fill="#e25a4a" /></svg>
        <svg width="8" height="8" viewBox="0 0 8 8" className="absolute left-[24px] top-[19px]"><path d="M4 8 8 4H5.500V0h-3v4H0z" fill="#2f9e55" /></svg>
        <span className="absolute right-[7px] top-[4px]">0K/s</span>
        <span className="absolute right-[7px] top-[19px]">0K/s</span>
        <span className="absolute right-[-6px] top-[12px] w-[10px] h-[12px] rounded-full bg-[#7aa6d8]" />
      </div>
      <div className="absolute left-[1238px] top-[142px] w-[50px] h-[50px] rounded-full bg-[#f4f4f4] border border-[#c8c8c8] flex items-center justify-center shadow-[0_2px_5px_rgba(0,0,0,0.35)]">
        <div className="w-[43px] h-[43px] rounded-full bg-[radial-gradient(circle_at_50%_65%,#ffa232_0%,#f58214_62%,#b85505_100%)] flex items-center justify-center text-white text-[15.500px] font-['Liberation_Sans',sans-serif]">87%</div>
      </div>

      <Logo />

      {/* red annotations */}
      <div className="absolute left-[220px] top-[28px] w-[321px] h-[40px] border border-[#f00]" />
      <div className="absolute left-[23px] top-[94px] w-[574px] h-[329px] border border-[#f00]" />
      <div className="absolute left-[557px] top-[398px] w-[39px] h-[11px] border border-[#f00]" />

      {/* watermark */}
      <div className="absolute left-[1022px] top-[606px] text-[16.700px] leading-[20px] text-[#dcdcd6] font-['Liberation_Mono',monospace] whitespace-nowrap">http://blog.csdn.net/dadaowuque</div>
    </div>
  );
};

export default App;
